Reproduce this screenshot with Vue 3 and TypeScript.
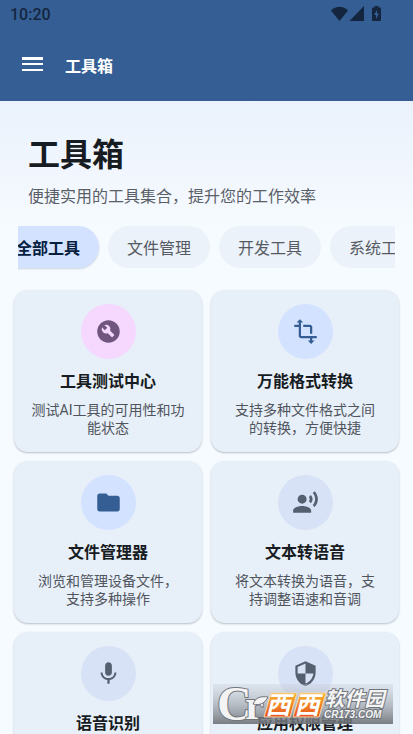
<script setup lang="ts">
import { onMounted, ref } from 'vue'

interface Tool {
  name: string
  desc: string
  icon: string
  tone: string
}

const categories: string[] = ['全部工具', '文件管理', '开发工具', '系统工具']
const active = ref('全部工具')
const strip = ref<HTMLElement | null>(null)

const tools: Tool[] = [
  {
    name: '工具测试中心',
    desc: '测试AI工具的可用性和功\n能状态',
    tone: 'pink',
    icon: 'M12 2C6.480 2 2 6.480 2 12s4.480 10 10 10 10-4.480 10-10S17.520 2 12 2zm4.900 13.490-1.400 1.400a.5.5 0 0 1-.710 0l-3.410-3.410a4 4 0 0 1-5.160-5.160l2.540 2.540 2.120-2.120-2.540-2.540a4 4 0 0 1 5.160 5.160l3.410 3.410c.190.2.190.520-.010.720z',
  },
  {
    name: '万能格式转换',
    desc: '支持多种文件格式之间\n的转换，方便快捷',
    tone: 'blue',
    icon: 'M22 18v-2H8V4h2L7 1 4 4h2v2H2v2h4v8c0 1.100.9 2 2 2h8v2h-2l3 3 3-3h-2v-2h4zM10 8h6v6h2V8c0-1.100-.9-2-2-2h-6v2z',
  },
  {
    name: '文件管理器',
    desc: '浏览和管理设备文件，\n支持多种操作',
    tone: 'blue',
    icon: 'M10 4H4c-1.100 0-2 .9-2 2v12c0 1.100.9 2 2 2h16c1.100 0 2-.9 2-2V8c0-1.100-.9-2-2-2h-8l-2-2z',
  },
  {
    name: '文本转语音',
    desc: '将文本转换为语音，支\n持调整语速和音调',
    tone: 'grey',
    icon: 'M9 5a4 4 0 1 0 0 8 4 4 0 0 0 0-8zM9 15c-2.670 0-8 1.340-8 4v2h16v-2c0-2.660-5.330-4-8-4zM16.760 5.360l-1.680 1.690c.840 1.180.840 2.710 0 3.890l1.680 1.690c2.020-2.020 2.020-5.070 0-7.270zM20.070 2l-1.630 1.630c2.770 3.020 2.770 7.560 0 10.740L20.070 16c3.900-3.890 3.910-9.950 0-14z',
  },
  {
    name: '语音识别',
    desc: '将语音内容转换为文字\n支持多种语言',
    tone: 'grey',
    icon: 'M12 14c1.660 0 2.990-1.340 2.990-3L15 5c0-1.660-1.340-3-3-3S9 3.340 9 5v6c0 1.660 1.340 3 3 3zm5.300-3c0 3-2.540 5.100-5.300 5.100S6.700 14 6.700 11H5c0 3.410 2.720 6.230 6 6.720V21h2v-3.280c3.280-.480 6-3.300 6-6.720h-1.700z',
  },
  {
    name: '应用权限管理',
    desc: '查看和管理应用的权限\n保护您的隐私',
    tone: 'grey',
    icon: 'M12 1 3 5v6c0 5.550 3.840 10.740 9 12 5.160-1.260 9-6.450 9-12V5l-9-4zm0 10.990h7c-.530 4.120-3.280 7.790-7 8.940V12H5V6.300l7-3.110v8.800z',
  },
]

onMounted(() => {
  if (strip.value) strip.value.scrollLeft = 21
})
</script>

<template>
  <div class="page">
    <header class="top">
      <div class="status">
        <span>10:20</span>
        <svg class="status-icons" viewBox="0 0 52 16" aria-hidden="true">
          <path d="M0 4.500C5-.5 12-.5 17 4.500L8.500 15z" />
          <path d="M33 0v15H18.500z" />
          <path fill-rule="evenodd" d="M43.500 0h4v1.500h1.500q1 0 1 1V14q0 1-1 1h-7q-1 0-1-1V2.500q0-1 1-1h1.500zM46 4l-3 5h2v4l3-5.500h-2z" />
        </svg>
      </div>
      <div class="bar">
        <button class="menu" type="button" aria-label="菜单">
          <svg viewBox="0 0 21 15" aria-hidden="true"><path d="M0 0h21v3H0zM0 6h21v2H0zM0 12h21v2H0z" /></svg>
        </button>
        <span class="bar-title">工具箱</span>
      </div>
    </header>

    <main>
      <section class="intro">
        <h1>工具箱</h1>
        <p>便捷实用的工具集合，提升您的工作效率</p>
      </section>

      <nav ref="strip" class="chips">
        <button
          v-for="c in categories"
          :key="c"
          type="button"
          class="chip"
          :class="{ active: c === active }"
          @click="active = c"
        >{{ c }}</button>
      </nav>

      <section class="grid">
        <article v-for="t in tools" :key="t.name" class="card">
          <div class="badge" :class="t.tone">
            <svg viewBox="0 0 24 24" aria-hidden="true"><path fill-rule="evenodd" :d="t.icon" /></svg>
          </div>
          <h2>{{ t.name }}</h2>
          <p>{{ t.desc }}</p>
        </article>
      </section>
    </main>

    <svg class="mark" viewBox="0 0 180 40" role="img" aria-label="西西软件园 CR173.COM">
      <defs>
        <linearGradient id="shade" x1="0" y1="0" x2="0" y2="1">
          <stop offset="0" stop-color="#c4cad2" stop-opacity="0.300" />
          <stop offset="1" stop-color="#6c7076" stop-opacity="0.900" />
        </linearGradient>
        <linearGradient id="flame" x1="0" y1="0" x2="0" y2="1">
          <stop offset="0" stop-color="#f9b52c" />
          <stop offset="1" stop-color="#e8521d" />
        </linearGradient>
      </defs>
      <rect width="180" height="40" fill="url(#shade)" />
      <text class="c" x="4" y="36">C</text>
      <text class="r" x="32" y="35">r</text>
      <path class="leaf" d="M40 20c3-7 8-8 15-7-3 6-8 9-15 7z" />
      <path class="tile" d="M58 9h26l-7 24H51z" />
      <path class="tile" d="M87 9h26l-7 24H80z" />
      <g transform="skewX(-14)">
        <text class="xi" x="60" y="30">西</text>
        <text class="xi" x="89" y="30">西</text>
        <text class="soft" x="117" y="22">软件园</text>
      </g>
      <text class="site" x="111" y="34">CR173.COM</text>
    </svg>
  </div>
</template>

<style>
body {
  margin: 0;
}
</style>

<style scoped>
.page {
  position: relative;
  height: 100vh;
  overflow: hidden;
  font-family: Roboto, "Noto Sans CJK SC", sans-serif;
  color: #171c22;
  background: linear-gradient(#eaf2fb 100px, #f1f6fe 170px, #f6fbff 230px);
}
.top {
  background: #355f94;
}
.status {
  display: flex;
  justify-content: space-between;
  align-items: center;
  height: 28px;
  padding: 0 30px 0 10px;
  font-size: 16px;
  font-weight: 500;
  color: #14263f;
}
.status-icons {
  width: 52px;
  height: 16px;
  fill: #14263f;
}
.bar {
  display: flex;
  align-items: center;
  gap: 22px;
  height: 73px;
  padding: 0 22px;
  color: #fff;
}
.menu {
  display: flex;
  padding: 0;
  border: 0;
  background: none;
}
.menu svg {
  width: 21px;
  height: 15px;
  fill: #fff;
}
.bar-title {
  font-size: 16px;
  font-weight: 700;
}
.intro {
  padding: 30px 28px 0;
}
h1 {
  margin: 0;
  font-size: 32px;
  line-height: 48px;
  font-weight: 700;
}
.intro p {
  margin: 6px 0 0;
  font-size: 16px;
  line-height: 24px;
  color: #5b6068;
}
.chips {
  display: flex;
  gap: 9px;
  margin: 13px 18px 0;
  padding: 4px 0;
  overflow-x: auto;
  scrollbar-width: none;
}
.chip {
  flex: none;
  height: 42px;
  padding: 0 19px;
  border: 0;
  border-radius: 21px;
  background: #ecf2fa;
  color: #565b63;
  font: 400 16px Roboto, "Noto Sans CJK SC", sans-serif;
}
.chip.active {
  background: #d3e2ff;
  color: #06203f;
  font-weight: 700;
  box-shadow: 0 1px 2px rgba(40, 60, 90, 0.2);
}
.grid {
  display: grid;
  grid-template-columns: 1fr 1fr;
  gap: 9px;
  padding: 18px 14px;
}
.card {
  display: flex;
  flex-direction: column;
  align-items: center;
  padding: 14px 12px 15px;
  border-radius: 14px;
  background: #e7eff8;
  box-shadow: 0 1px 2px rgba(40, 50, 65, 0.3);
  text-align: center;
}
.badge {
  display: flex;
  align-items: center;
  justify-content: center;
  width: 55px;
  height: 55px;
  border-radius: 50%;
}
.badge svg {
  width: 27px;
  height: 27px;
  fill: currentColor;
}
.pink {
  background: #f6d8ff;
  color: #70557f;
}
.blue {
  background: #d3e2ff;
  color: #355f94;
}
.grey {
  background: #d8e2f6;
  color: #545f70;
}
h2 {
  margin: 11px 0 0;
  font-size: 16px;
  line-height: 24px;
  font-weight: 700;
}
.card p {
  margin: 7px 0 0;
  font-size: 14px;
  line-height: 18px;
  color: #50555d;
  white-space: pre-line;
}
.mark {
  position: absolute;
  right: 20px;
  bottom: 10px;
  width: 180px;
  height: 40px;
}
.mark text {
  font-family: "Noto Sans CJK SC", sans-serif;
  font-weight: 700;
  fill: #f4f4f4;
  stroke: #70757c;
  stroke-width: 2px;
  paint-order: stroke;
}
.mark .c,
.mark .r {
  font-family: "Liberation Serif", serif;
  font-size: 48px;
  font-weight: 700;
}
.mark .r {
  font-size: 42px;
}
.leaf {
  fill: #f4f4f4;
  stroke: #70757c;
}
.tile {
  fill: url(#flame);
  stroke: #f7d9b0;
}
.mark .xi {
  font-size: 25px;
  fill: #fff;
  stroke: none;
}
.mark .soft {
  font-size: 20px;
}
.mark .site {
  font-family: "Liberation Sans", sans-serif;
  font-size: 10px;
  font-style: italic;
}
</style>
